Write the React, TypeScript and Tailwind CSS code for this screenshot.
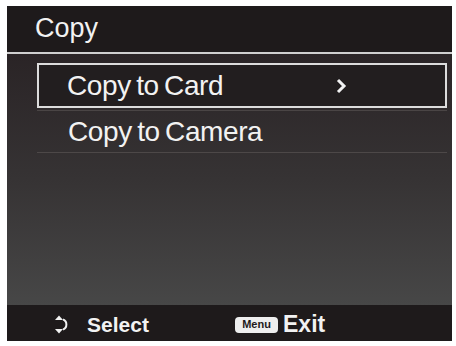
import React from 'react';

const font = { fontFamily: '"Liberation Sans", Arial, sans-serif' };

function UpDownIcon() {
    return (
        <svg width="14" height="21" viewBox="0 0 14 21" className="shrink-0">
            <path d="M1 6 L5 1.5 L9 6 Z" fill="#f2f2f2" />
            <path d="M1 15 L5 19.5 L9 15 Z" fill="#f2f2f2" />
            <path d="M9 5.5 C13.5 7, 13.5 14, 9 15.5" stroke="#f2f2f2" strokeWidth="2" fill="none" />
        </svg>
    );
}

export default function App() {
    return (
        <div className="w-[456px] h-[346px] bg-white pt-[6px] pl-[7px] pr-[4px] pb-[5px]" style={font}>
            <div className="w-full h-full flex flex-col bg-[#1d191a] text-[#f2f2f2]">
                {/* title */}
                <div className="h-[46px] flex items-center pl-[28px] bg-[#1e1a1b]">
                    <span className="text-[27px] leading-none pb-[2px]">Copy</span>
                </div>
                <div className="h-[2px] bg-[#cfcfcf]" />

                {/* menu list */}
                <div className="flex-1 flex flex-col pt-[9px] pl-[30px] pr-[5px] bg-gradient-to-b from-[#2a2426] via-[#363334] to-[#474747]">
                    <div className="h-[45px] border-2 border-[#dcdcdc] bg-[#221e1f] flex items-center pl-[28px]">
                        <span className="text-[28px] leading-none tracking-[-0.4px] [word-spacing:-2px] w-[268px]">Copy to Card</span>
                        <svg width="12" height="16" viewBox="0 0 12 16">
                            <path d="M3 2 L9 8 L3 14" stroke="#f2f2f2" strokeWidth="3" fill="none" />
                        </svg>
                    </div>
                    <div className="h-[3px] border-b border-[#4a4545]" />
                    <div className="h-[42px] flex items-center pl-[31px] border-b border-[#4d4848]">
                        <span className="text-[28px] leading-none tracking-[-0.4px] [word-spacing:-2px]">Copy to Camera</span>
                    </div>
                </div>

                {/* footer */}
                <div className="h-[36px] flex items-center bg-[#1e1a1b] pt-[3px]">
                    <div className="flex items-center pl-[47px] gap-[19px] w-[228px]">
                        <UpDownIcon />
                        <span className="text-[21px] font-bold leading-none">Select</span>
                    </div>
                    <div className="flex items-center gap-[5px]">
                        <span className="w-[43px] h-[16px] rounded-[4px] bg-[#eeeeee] text-[#1e1a1b] text-[11px] font-bold leading-none flex items-center justify-center">
                            Menu
                        </span>
                        <span className="text-[23px] font-bold leading-none">Exit</span>
                    </div>
                </div>
            </div>
        </div>
    );
}
